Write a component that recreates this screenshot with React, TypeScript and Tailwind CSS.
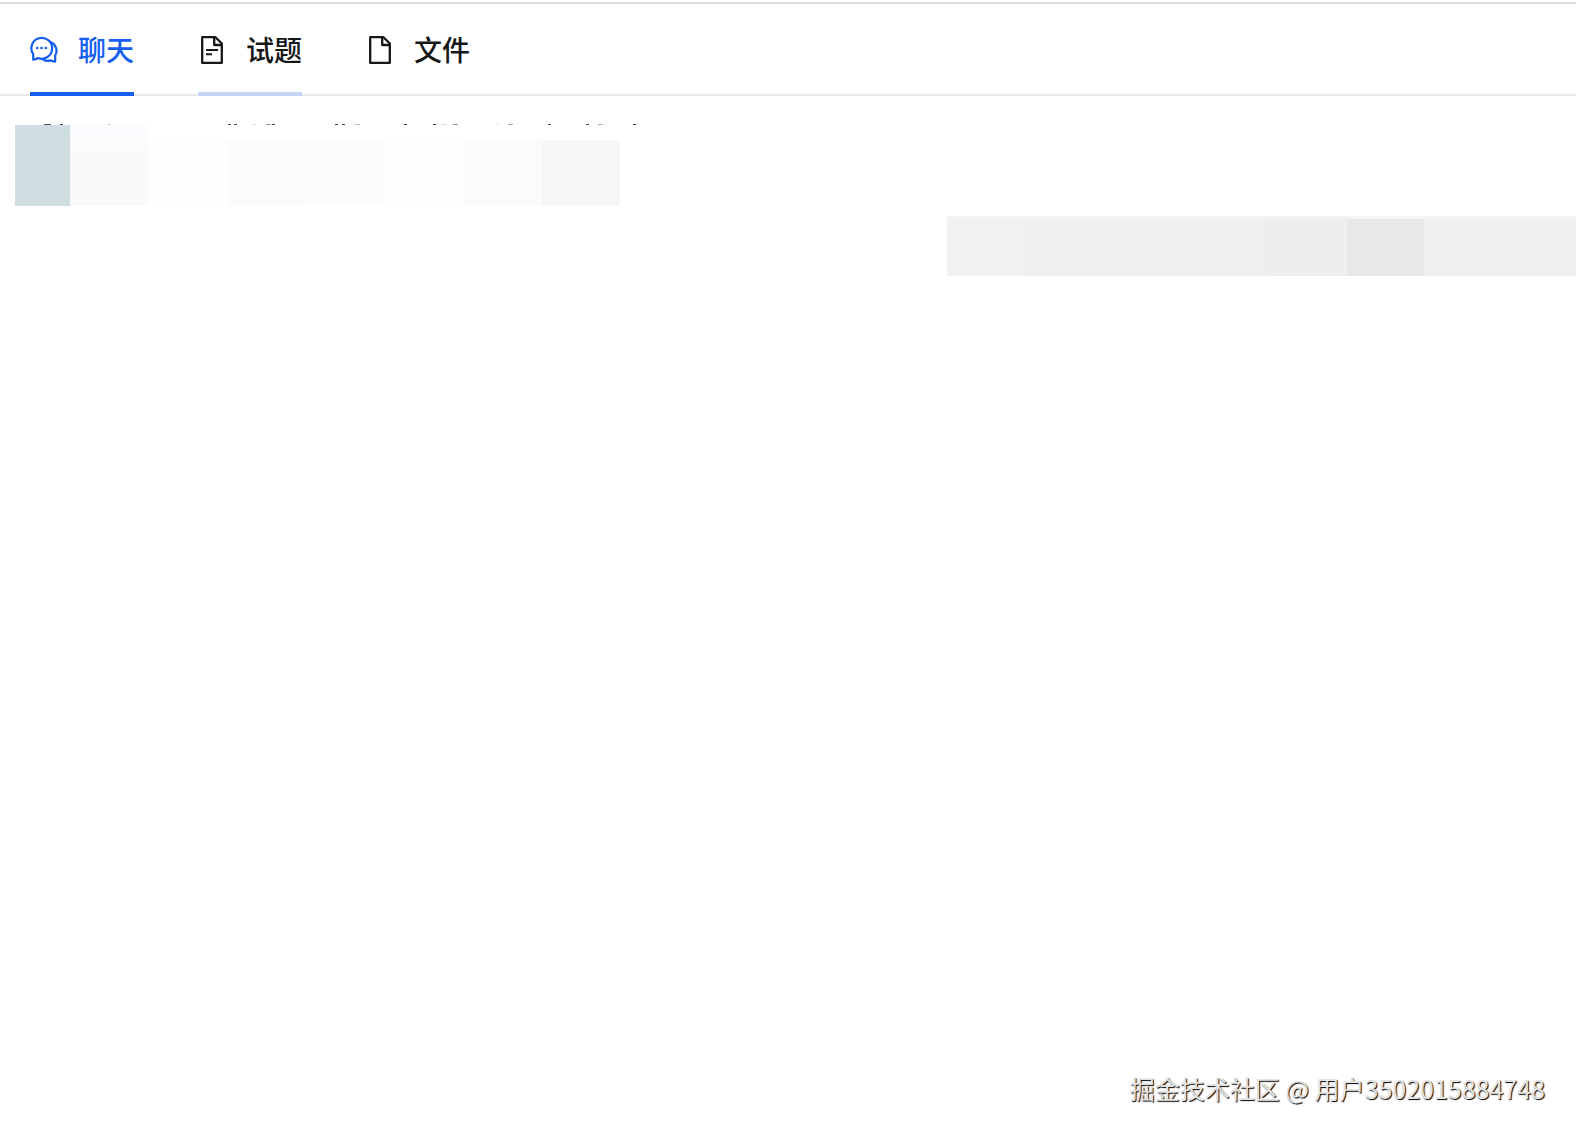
const tabs = [
  { id: "chat", label: "聊天", Icon: ChatIcon },
  { id: "questions", label: "试题", Icon: QuestionIcon },
  { id: "files", label: "文件", Icon: FileIcon },
];

const tabStyles: Record<string, string> = {
  chat: "border-[#155eef] text-[#155eef]",
  questions: "border-[#c5d3f6] text-[#171717]",
  files: "border-transparent text-[#171717]",
};

function ChatIcon() {
  return (
    <svg className="size-7" viewBox="0 0 28 28" fill="none" stroke="currentColor" strokeWidth="2.2" strokeLinejoin="round" strokeLinecap="round" aria-hidden="true">
      <path d="M3.2 23.6V18.2A10.4 10.4 0 1 1 8 22Q6 23.4 3.2 23.6Z" />
      <path d="M20.8 6A9.6 9.6 0 0 1 25.2 19.6V25.6Q22.6 25.4 21 24.4Q17 25.6 13.4 23.8" />
      <path d="M7.2 12h.1M11.5 12h.1M15.8 12h.1" strokeWidth="2.6" />
    </svg>
  );
}

function FileOutline() {
  return (
    <>
      <path d="M4.2 1.2H17.5L23.8 7.5V26.8H4.2Z" />
      <path d="M16.2 1.2V9H23.8" />
    </>
  );
}

function QuestionIcon() {
  return (
    <svg className="size-7" viewBox="0 0 28 28" fill="none" stroke="currentColor" strokeWidth="2.3" strokeLinejoin="round" aria-hidden="true">
      <FileOutline />
      <path d="M8 14H20M8 18.2H14" strokeWidth="2" />
    </svg>
  );
}

function FileIcon() {
  return (
    <svg className="size-7" viewBox="0 0 28 28" fill="none" stroke="currentColor" strokeWidth="2.3" strokeLinejoin="round" aria-hidden="true">
      <FileOutline />
    </svg>
  );
}

const marks: [number, number, string][] = [
  [29, 7, "#555"], [45, 3, "#444"], [93, 2, "#bbb"], [213, 3, "#444"], [219, 3, "#444"],
  [238, 3, "#ddd"], [251, 5, "#999"], [257, 3, "#444"], [320, 3, "#444"], [327, 3, "#444"],
  [340, 5, "#bbb"], [389, 3, "#333"], [418, 3, "#333"], [426, 6, "#ddd"], [438, 5, "#999"],
  [482, 1, "#bbb"], [493, 5, "#aaa"], [533, 3, "#444"], [571, 3, "#444"], [583, 5, "#aaa"], [618, 3, "#333"],
];

function ClippedText() {
  return (
    <svg className="h-px w-[621px]" viewBox="0 0 621 1" aria-hidden="true">
      {marks.map(([x, w, fill]) => (
        <rect key={x} x={x} y="0" width={w} height="1" fill={fill} />
      ))}
    </svg>
  );
}

export default function App() {
  return (
    <div className="flex min-h-screen flex-col bg-white font-['Noto_Sans_CJK_SC',sans-serif]">
      <header className="mt-0.5 border-t-2 border-[#dedede]">
        <nav role="tablist" className="flex h-[92px] gap-16 border-b-2 border-[#ebebeb] px-[30px]">
          {tabs.map(({ id, label, Icon }) => (
            <button
              key={id}
              role="tab"
              type="button"
              aria-selected={id === "chat"}
              className={`-mb-0.5 flex items-center gap-5 border-b-4 pt-1 text-[28px] leading-10 font-medium whitespace-nowrap ${tabStyles[id]}`}
            >
              <Icon />
              <span className="pb-0.5">{label}</span>
            </button>
          ))}
        </nav>
      </header>

      <main className="flex flex-1 flex-col pt-7">
        <section className="pl-[15px]">
          <ClippedText />
          <div className="flex h-[81px] items-end">
            <div className="h-full w-[55px] bg-[#cfdfe1]" />
            <div className="h-full w-[78px] bg-linear-to-b from-[#f9fcff] to-[#fafafa] to-30%" />
            <div className="h-[66px] w-20 bg-[#fefefe]" />
            <div className="h-[66px] w-[76px] bg-[#fbfbfb]" />
            <div className="h-[66px] w-20 bg-[#fcfcfc]" />
            <div className="h-[66px] w-20 bg-[#fefefe]" />
            <div className="h-[66px] w-[78px] bg-[#fbfbfb]" />
            <div className="h-[66px] w-[78px] bg-[#f6f6f6]" />
          </div>
        </section>

        <section className="mt-2.5 flex justify-end">
          <div className="flex h-[60px] border-t-[3px] border-[#f4f4f4]">
            <div className="w-[78px] bg-[#f1f1f1]" />
            <div className="w-20 bg-[#f0f0f0]" />
            <div className="w-40 bg-[#efefef]" />
            <div className="w-[82px] bg-[#eeeeee]" />
            <div className="w-[77px] bg-[#e8e8e8]" />
            <div className="w-[152px] bg-[#efefef]" />
          </div>
        </section>

        <footer className="mt-auto flex justify-end pr-[31px] pb-7">
          <p className="text-[25px] leading-9 text-[#e4e4e4] [text-shadow:1px_1px_1px_#000]">掘金技术社区 @ 用户3502015884748</p>
        </footer>
      </main>
    </div>
  );
}
